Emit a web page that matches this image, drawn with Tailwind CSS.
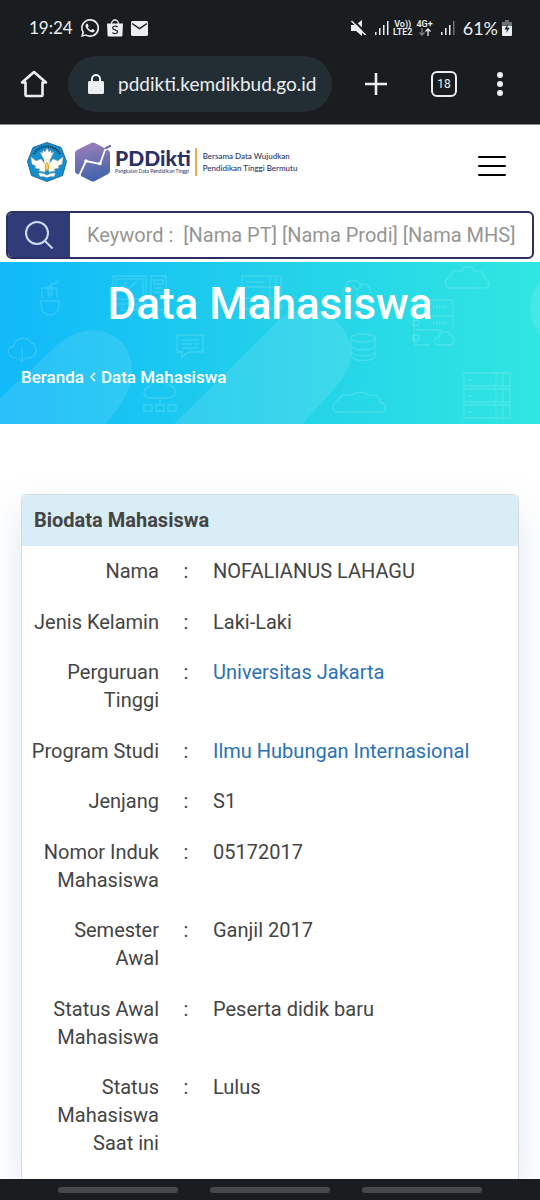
<!DOCTYPE html>
<html lang="id">
<head>
  <meta charset="utf-8">
  <title>PDDikti - Data Mahasiswa</title>
  <meta name="viewport" content="width=device-width, initial-scale=1">
  <script src="https://cdn.jsdelivr.net/npm/@tailwindcss/browser@4"></script>
</head>
<body class="min-h-screen flex flex-col bg-white font-['Roboto',sans-serif] text-[#444444]">

  <!-- phone status bar + browser toolbar -->
  <div class="bg-[#191d20] text-[#eceff1] border-b border-[#8b9094] font-['Lato',sans-serif]">
    <div class="flex justify-between items-center h-14 pl-[29px] pr-7">
      <div class="flex items-center gap-2">
        <span class="text-[17px]">19:24</span>
        <svg class="w-[18px] h-[18px]" viewBox="0 0 24 24" fill="currentColor">
          <path d="M17.5 14.4c-.3-.1-1.8-.9-2-1-.3-.1-.5-.1-.7.2-.2.3-.8 1-.9 1.100-.2.2-.3.2-.6.1-.3-.2-1.300-.5-2.400-1.500-.9-.8-1.500-1.800-1.700-2.100-.2-.3 0-.5.1-.6l.5-.5c.1-.2.2-.3.3-.5.1-.2 0-.4 0-.5-.1-.2-.7-1.600-.9-2.200-.2-.6-.5-.5-.7-.5h-.6c-.2 0-.5.1-.8.4-.3.3-1 1-1 2.500s1.100 2.900 1.200 3.100c.2.2 2.100 3.200 5.100 4.500 3 1.200 3 .8 3.500.8.600-.1 1.800-.7 2-1.400.2-.7.2-1.300.2-1.400-.1-.2-.3-.3-.6-.4z"/>
          <path fill-rule="evenodd" d="M12 0A12 12 0 0 0 1.700 18L0 24l6.200-1.600A12 12 0 1 0 12 0zm0 2.200a9.800 9.800 0 1 1-5.300 18l-3.600 1 1-3.500A9.800 9.800 0 0 1 12 2.200z"/>
        </svg>
        <svg class="w-4 h-[18px]" viewBox="0 0 16 18">
          <path d="M4.500 5a3.500 4 0 0 1 7 0" fill="none" stroke="currentColor" stroke-width="1.300"/>
          <path d="M0 4.500h16l-.6 12a1 1 0 0 1-1 1H1.600a1 1 0 0 1-1-1z" fill="currentColor"/>
          <path d="M10.600 8c-1.500-1.300-5-1-5 1 0 2.300 5 1.500 5 3.800 0 2-3.500 2.300-5.300.8" fill="none" stroke="#191d20" stroke-width="1.200"/>
        </svg>
        <svg class="w-[17px] h-[15px]" viewBox="0 0 17 15">
          <rect width="17" height="15" rx="1.500" fill="currentColor"/>
          <path d="M1 2.500l7.500 5 7.500-5" fill="none" stroke="#191d20" stroke-width="1.500"/>
        </svg>
      </div>
      <div class="flex items-center gap-1">
        <svg class="w-4 h-4 mr-1" viewBox="0 0 16 16">
          <path d="M0 5h4.500L11 0v16l-6-5H0z" fill="currentColor"/>
          <path d="M2 0l14 14" stroke="#191d20" stroke-width="2"/>
          <path d="M.5 1l14 14" stroke="currentColor" stroke-width="1.500"/>
        </svg>
        <svg class="w-[14px] h-4" viewBox="0 0 14 16" fill="currentColor">
          <path d="M0 12h1.500v3H0zM4 8h1.500v7H4zM8 5h1.500v10H8zM12 1h1.500v14H12z"/>
        </svg>
        <span class="flex flex-col items-center font-['Roboto',sans-serif] text-[9px] leading-[8px] font-semibold"><span>Vo))</span><span>LTE2</span></span>
        <span class="flex flex-col items-center font-['Roboto',sans-serif] text-[9px] leading-[8px] font-semibold">
          <span>4G+</span>
          <svg class="w-3 h-2" viewBox="0 0 12 8" fill="none" stroke-width="1.300">
            <path d="M3 0v7M.5 4.500L3 7l2.500-2.500" stroke="#7c8184"/>
            <path d="M9 8V1M6.500 3.500L9 1l2.500 2.500" stroke="currentColor"/>
          </svg>
        </span>
        <svg class="w-[14px] h-4 ml-1" viewBox="0 0 14 16" fill="currentColor">
          <path d="M0 12h1.500v3H0zM4 8h1.500v7H4zM8 5h1.500v10H8z"/>
          <path d="M12 1h1.500v14H12z" fill="#6c7174"/>
        </svg>
        <span class="text-[18px] ml-1">61%</span>
        <svg class="w-[10px] h-4" viewBox="0 0 10 16">
          <path d="M3 0h4v2h3v5H0V2h3z" fill="#6c7174"/>
          <path d="M0 6h10v9a1 1 0 0 1-1 1H1a1 1 0 0 1-1-1z" fill="currentColor"/>
          <path d="M6 4L2.500 9.500H5L4 13l3.800-5.200H5.300z" fill="#191d20"/>
        </svg>
      </div>
    </div>

    <div class="flex items-center h-14 mb-3 pl-5 pr-9">
      <button aria-label="Home" class="w-7 flex justify-center">
        <svg class="w-7 h-7" viewBox="0 0 28 28" fill="none" stroke="currentColor" stroke-width="2.600" stroke-linejoin="round">
          <path d="M5.500 12.500H2L14 2l12 10.500h-3.500V25a1 1 0 0 1-1 1h-15a1 1 0 0 1-1-1z"/>
        </svg>
      </button>
      <div class="flex-1 flex items-center gap-[14px] h-14 ml-5 rounded-full bg-[#222e34] pl-5 pr-2">
        <svg class="w-4 h-5 shrink-0" viewBox="0 0 16 20">
          <path d="M4 8V5a4 4 0 0 1 8 0v3" fill="none" stroke="currentColor" stroke-width="2"/>
          <rect y="7" width="16" height="13" rx="1.500" fill="currentColor"/>
        </svg>
        <input type="text" aria-label="Address" value="pddikti.kemdikbud.go.id" class="w-full min-w-0 bg-transparent text-[19px] outline-none">
      </div>
      <div class="flex justify-between items-center w-[140px] ml-8">
        <button aria-label="New tab">
          <svg class="w-6 h-6" viewBox="0 0 24 24" stroke="currentColor" stroke-width="2.600"><path d="M12 1v22M1 12h22"/></svg>
        </button>
        <button class="w-[26px] h-[26px] ml-6 rounded-md border-2 border-current text-[12px] leading-none font-['Roboto',sans-serif]">18</button>
        <button aria-label="More" class="ml-5">
          <svg class="w-2 h-6" viewBox="0 0 8 24" fill="currentColor"><circle cx="4" cy="3" r="3"/><circle cx="4" cy="12" r="3"/><circle cx="4" cy="21" r="3"/></svg>
        </button>
      </div>
    </div>
  </div>

  <!-- site header -->
  <header>
    <div class="flex justify-between items-center h-[74px] mb-3 pl-[27px] pr-[34px]">
      <a href="#" class="flex items-center font-['Lato',sans-serif] text-[#2b3263]">
        <svg class="w-10 h-10" viewBox="0 0 40 40">
          <path d="M20 .5l14 5 5.500 14-4 14L20 39.500l-15.500-6L.5 19.500l5.500-14z" fill="#168fd0" stroke="#1b6d9e" stroke-linejoin="round"/>
          <path d="M7 12a15 15 0 0 1 26 0" fill="none" stroke="#173f59" stroke-width="2.200" stroke-dasharray="1.500 .8"/>
          <path d="M17 18l-4-8 2.500 1L16 8l2 2 2-4 2 4 2-2 .5 3 2.500-1-4 8z" fill="#fff" stroke="#8d8d80" stroke-width=".4"/>
          <path d="M17 17h6l-1 10h-4z" fill="#f4f1e6"/>
          <path d="M4 15l5 4 5-2 5 6-1 7-6-1 1-2-5-1 1-2-4-2z" fill="#fffdf5" stroke="#c9b980" stroke-width=".5"/>
          <path d="M36 15l-5 4-5-2-5 6 1 7 6-1-1-2 5-1-1-2 4-2z" fill="#fffdf5" stroke="#c9b980" stroke-width=".5"/>
          <path d="M20 20c3 3 3 6 0 9-3-3-3-6 0-9z" fill="#e0ac29"/>
          <path d="M20 22v5" stroke="#fff3b8" stroke-width="1"/>
          <path d="M11 31q5-1 9 2 4-3 9-2l-2 4q-4-1-7 1-3-2-7-1z" fill="#fff" stroke="#39708e" stroke-width=".6"/>
        </svg>
        <svg class="w-9 h-10 ml-2" viewBox="0 0 36 40">
          <defs>
            <linearGradient id="hex" x1=".4" y1="0" x2=".6" y2="1">
              <stop offset="0" stop-color="#9c7fb8"/><stop offset=".5" stop-color="#6d70b2"/><stop offset="1" stop-color="#3a62ad"/>
            </linearGradient>
          </defs>
          <path d="M16 1q2-1 4 0l13 7q2 1 2 3v18q0 2-2 3l-13 7q-2 1-4 0L2 32q-2-1-2-3V11q0-2 2-3z" fill="url(#hex)"/>
          <path d="M4 34l7-15 14 3 5-14 5-3" fill="none" stroke="#fff" stroke-width="1.800"/>
          <circle cx="11" cy="19" r="1.800" fill="#fff"/><circle cx="25" cy="21.500" r="1.800" fill="#fff"/>
          <circle cx="4" cy="34" r="2" fill="#fff"/><path d="M31 6l4-2" stroke="#7b6ba9" stroke-width="2.500" stroke-linecap="round"/>
        </svg>
        <span class="flex flex-col ml-1">
          <span class="text-[21px] leading-[18px] font-black">PDDikti</span>
          <span class="text-[5px] leading-[8px]">Pangkalan Data Pendidikan Tinggi</span>
        </span>
        <span class="ml-1 pl-1.5 border-l-2 border-[#eda94e] py-0.5 text-[8px] leading-3 font-medium whitespace-nowrap">Bersama Data Wujudkan<br>Pendidikan Tinggi Bermutu</span>
      </a>
      <button aria-label="Menu" class="flex flex-col gap-[7px] w-7 pt-2">
        <span class="w-full h-0.5 rounded bg-black"></span>
        <span class="w-full h-0.5 rounded bg-black"></span>
        <span class="w-full h-0.5 rounded bg-black"></span>
      </button>
    </div>
    <form class="flex h-12 mx-1.5 mb-[3px] rounded-md border-2 border-[#2b3263] overflow-hidden">
      <button type="button" aria-label="Cari" class="flex justify-center items-center w-[62px] bg-[#303c77] shrink-0">
        <svg class="w-7 h-7" viewBox="0 0 28 28" fill="none" stroke="#cddcf5" stroke-width="2"><circle cx="12" cy="12" r="11"/><path d="M20 20l7.500 7.500"/></svg>
      </button>
      <input type="text" aria-label="Keyword" placeholder="Keyword :&nbsp; [Nama PT] [Nama Prodi] [Nama MHS]" class="flex-1 min-w-0 pl-[17px] text-[20px] placeholder:text-[#959595] outline-none">
    </form>
  </header>

  <!-- hero banner -->
  <section class="relative h-[162px] bg-linear-to-r from-[#11b9fa] via-[#22d0ea] to-[#30e6e1] text-white font-medium">
    <svg class="absolute inset-0 w-full h-full" viewBox="0 0 540 162" preserveAspectRatio="xMidYMid slice" fill="none">
      <g fill="#fff" fill-opacity=".1">
        <path d="M0 136L52 88C78 60 112 64 126 86C138 108 132 134 105 162H0z"/>
        <path d="M174 162L280 57C305 36 340 50 350 80C356 112 335 124 303 162z"/>
        <circle cx="570" cy="46" r="40"/>
      </g>
      <g stroke="#fff" stroke-opacity=".15" stroke-width="1.300">
        <path d="M42 36v-10h15v10M49.500 36V26q0-4 4-4t4-5M41 39h18v5a9 9 0 0 1-18 0zM48 25h4v8h-4z"/>
        <path d="M17 96c-10 0-12-11-3-12 1-10 15-10 17-3 7 0 8 16-3 15h-3M22 86v14M19 97l3 3 3-3"/>
        <path d="M113 14h33v28h-33zM116 17h27v20h-27zM119 27l8-7M125 30l12-11M151 14h15v34h-15zM154 18h9v4h-9zM154 26h9M154 30h9M122 42v6h15v-6"/>
        <path d="M242 14h39v11h-39zM242 25h39v11h-39zM242 36h39v11h-39zM270 14v33M276 14v33M246 20h18"/>
        <path d="M177 73h26v17h-15l-6 5v-5h-5zM182 78h16M182 82h10M195 82h4M182 86h16"/>
        <path d="M150 136c-8 0-8-10 0-11 1-10 16-10 18-2 9 1 10 13 0 13zM160 136v7M144 143h8v6h-8zM156 143h8v6h-8zM168 143h8v6h-8z"/>
        <path d="M348 34c-7 0-7-8-2-10 1-7 12-7 14-2 7-2 12 4 9 10M357 32v14M353 24l4 4 5-5"/>
        <ellipse cx="363" cy="76" rx="12" ry="4"/>
        <path d="M351 78v16c3 6 22 6 24 0V76M351 84c3 5 22 5 24 0M351 90c3 5 22 5 24 0"/>
        <path d="M337 150c-6 0-5-9 1-11 1-6 9-8 13-5 5-5 15-5 18 0 5-3 12 1 11 6 8 2 6 11 0 10z"/>
        <path d="M450 26c-6 0-6-10 0-11 1-6 7-8 11-5 3-8 12-6 13 0 6-3 11 1 10 6 7 2 6 10 0 10z"/>
        <path d="M453 66V41q0-3-3-3h-33q-3 0-3 3v10q0 3 3 3h36M414 54v11q0 3 3 3h25M414 68v12q0 3 3 3h13"/>
        <path d="M433 45h15M433 61h15" stroke-dasharray="1.500 1.500" stroke-width="3"/>
        <circle cx="416" cy="61" r="3"/><circle cx="416" cy="76" r="3"/>
        <path d="M439 83c-6-1-5-8 0-8 1-7 10-7 12-1 4 1 4 9-1 9z"/>
        <path d="M464 111h46v13h-46zM464 127h46v13h-46zM464 143h46v13h-46zM496 111v13M503 111v13M496 127v13M503 127v13M496 143v13M503 143v13M468 118h4M468 134h4M468 150h4"/>
      </g>
    </svg>
    <div class="relative px-[21px] pt-4">
      <h1 class="text-[44px] leading-[52px] text-center">Data Mahasiswa</h1>
      <nav class="flex items-center mt-9 text-[17px] leading-[22px]">
        <a href="#">Beranda</a>
        <svg class="w-[7px] h-[10px] mx-[5px]" viewBox="0 0 7 10" fill="none" stroke="currentColor" stroke-width="1.500"><path d="M6 1L2 5l4 4"/></svg>
        <span>Data Mahasiswa</span>
      </nav>
    </div>
  </section>

  <!-- student data -->
  <main class="flex-1 flex flex-col px-[21px] pt-[70px] overflow-hidden">
    <div class="flex-1 rounded-t-md border border-b-0 border-[#d5dbe0] bg-white shadow-[0_16px_40px_rgba(90,125,165,0.18)]">
      <h2 class="px-3 py-3 rounded-t-md bg-[#d9edf6] text-[20px] leading-[27px] font-bold">Biodata Mahasiswa</h2>
      <table class="w-full text-[20px] leading-7 [&_td]:py-[11px] [&_th]:py-[11px] [&_th]:font-normal [&_tr]:align-top [&_tr:nth-child(odd)]:border-b [&_tr]:border-transparent">
        <tbody>
          <tr><th scope="row" class="w-[150px] pl-2 pr-[13px] text-right">Nama</th><td class="w-7 text-center">:</td><td class="pl-[13px]">NOFALIANUS LAHAGU</td></tr>
          <tr><th scope="row" class="pl-2 pr-[13px] text-right">Jenis Kelamin</th><td class="text-center">:</td><td class="pl-[13px]">Laki-Laki</td></tr>
          <tr><th scope="row" class="pl-2 pr-[13px] text-right">Perguruan Tinggi</th><td class="text-center">:</td><td class="pl-[13px]"><a href="#" class="text-[#2a72b5]">Universitas Jakarta</a></td></tr>
          <tr><th scope="row" class="pl-2 pr-[13px] text-right">Program Studi</th><td class="text-center">:</td><td class="pl-[13px]"><a href="#" class="text-[#2a72b5]">Ilmu Hubungan Internasional</a></td></tr>
          <tr><th scope="row" class="pl-2 pr-[13px] text-right">Jenjang</th><td class="text-center">:</td><td class="pl-[13px]">S1</td></tr>
          <tr><th scope="row" class="pl-2 pr-[13px] text-right">Nomor Induk Mahasiswa</th><td class="text-center">:</td><td class="pl-[13px]">05172017</td></tr>
          <tr><th scope="row" class="pl-2 pr-[13px] text-right">Semester<br>Awal</th><td class="text-center">:</td><td class="pl-[13px]">Ganjil 2017</td></tr>
          <tr><th scope="row" class="pl-2 pr-[13px] text-right">Status Awal Mahasiswa</th><td class="text-center">:</td><td class="pl-[13px]">Peserta didik baru</td></tr>
          <tr><th scope="row" class="pl-2 pr-[13px] text-right">Status Mahasiswa Saat ini</th><td class="text-center">:</td><td class="pl-[13px]">Lulus</td></tr>
        </tbody>
      </table>
    </div>
  </main>

  <!-- gesture bar -->
  <div class="sticky bottom-0 flex justify-center items-center gap-8 h-[21px] px-14 bg-[#191d20]">
    <span class="flex-1 max-w-[120px] h-1.5 rounded-full bg-[#45494c]"></span>
    <span class="flex-1 max-w-[120px] h-1.5 rounded-full bg-[#45494c]"></span>
    <span class="flex-1 max-w-[120px] h-1.5 rounded-full bg-[#45494c]"></span>
  </div>
</body>
</html>
